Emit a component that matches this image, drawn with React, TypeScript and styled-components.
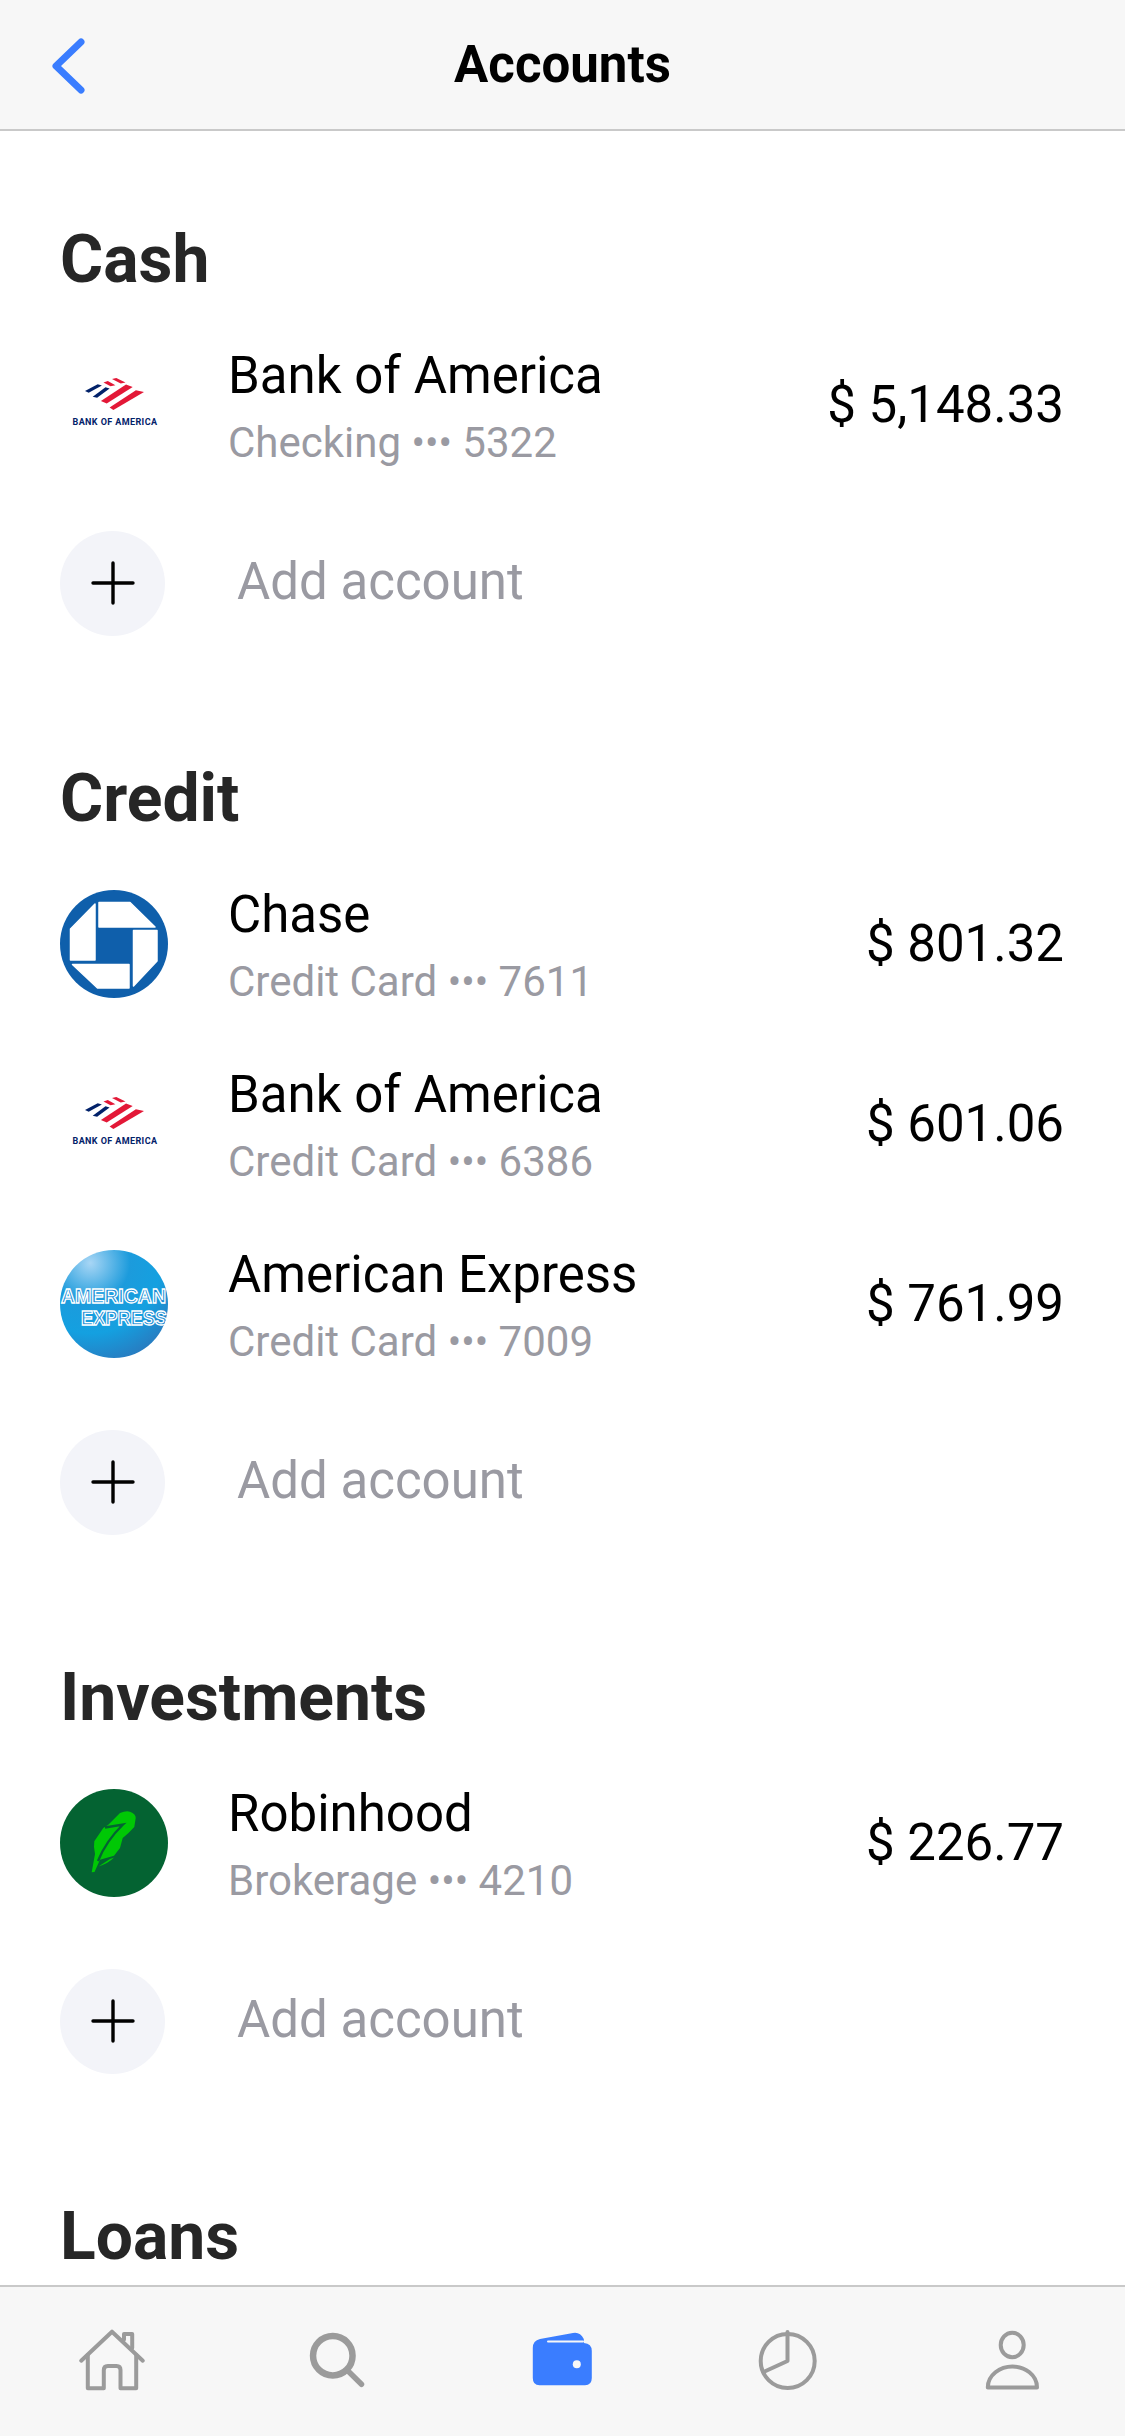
import React from "react";
import styled, { createGlobalStyle } from "styled-components";

const GlobalStyle = createGlobalStyle`
  html, body {
    margin: 0;
    padding: 0;
    background: #fff;
  }
  * {
    box-sizing: border-box;
  }
`;

type LogoKind = "boa" | "chase" | "amex" | "robinhood";

type Account = {
  logo: LogoKind;
  name: string;
  kind: string;
  last: string;
  amount: string;
};

const sections: { title: string; accounts: Account[] }[] = [
  {
    title: "Cash",
    accounts: [{ logo: "boa", name: "Bank of America", kind: "Checking", last: "5322", amount: "$ 5,148.33" }],
  },
  {
    title: "Credit",
    accounts: [
      { logo: "chase", name: "Chase", kind: "Credit Card", last: "7611", amount: "$ 801.32" },
      { logo: "boa", name: "Bank of America", kind: "Credit Card", last: "6386", amount: "$ 601.06" },
      { logo: "amex", name: "American Express", kind: "Credit Card", last: "7009", amount: "$ 761.99" },
    ],
  },
  {
    title: "Investments",
    accounts: [{ logo: "robinhood", name: "Robinhood", kind: "Brokerage", last: "4210", amount: "$ 226.77" }],
  },
];

const BoaLogo = () => (
  <svg width="108" height="108" viewBox="0 0 108 108">
    <polygon points="25,40.1 37.7,33.2 41.9,34.6 28.7,41.8" fill="#012169" />
    <polygon points="32.7,45.8 45.5,36.3 49.6,37.6 37.1,46.8" fill="#012169" />
    <polygon points="52,27.9 56.3,27 65.5,31.6 60.7,32.6" fill="#e31837" />
    <polygon points="43.5,31.6 47.8,29.9 55.4,34.2 50.5,35.2" fill="#e31837" />
    <polygon points="40.9,50 66,33.5 72.7,35.9 46.7,52.4" fill="#e31837" />
    <polygon points="49.6,56.6 75.9,39.2 84,40.9 53.4,59" fill="#e31837" />
    <text x="12.5" y="74" textLength="84.5" fontFamily="Roboto, sans-serif" fontWeight="700" fontSize="9" fill="#012169">
      BANK OF AMERICA
    </text>
  </svg>
);

const ChaseLogo = () => (
  <svg width="108" height="108" viewBox="0 0 108 108">
    <circle cx="54" cy="54" r="54" fill="#0f5fab" />
    <g fill="#fff" stroke="#fff" strokeWidth="1.5" strokeLinejoin="round">
      <polygon points="39,12.5 70,12.5 95,37 39,37" />
      <polygon points="73.5,40.5 97,40.5 97,71 73.5,96" />
      <polygon points="69,74.5 69,98 37.5,98 12.5,74.5" />
      <polygon points="35,14 35,70 10.5,70 10.5,39" />
    </g>
  </svg>
);

const AmexLogo = () => (
  <svg width="108" height="108" viewBox="0 0 108 108">
    <defs>
      <radialGradient id="amexFill" cx="0.28" cy="0.12" r="1.05">
        <stop offset="0" stopColor="#a8d6f5" />
        <stop offset="0.35" stopColor="#1c9bdc" />
        <stop offset="0.62" stopColor="#14a0e0" />
        <stop offset="1" stopColor="#2f6fb5" />
      </radialGradient>
      <clipPath id="amexClip">
        <circle cx="54" cy="54" r="54" />
      </clipPath>
    </defs>
    <circle cx="54" cy="54" r="54" fill="url(#amexFill)" />
    <g
      clipPath="url(#amexClip)"
      fontFamily="'Liberation Sans', sans-serif"
      fontSize="20"
      fontWeight="700"
      fill="#1a8ad4"
      stroke="#fff"
      strokeWidth="1.3"
    >
      <text x="1" y="53" textLength="105" lengthAdjust="spacingAndGlyphs">AMERICAN</text>
      <text x="21" y="75" textLength="86" lengthAdjust="spacingAndGlyphs">EXPRESS</text>
    </g>
  </svg>
);

const RobinhoodLogo = () => (
  <svg width="108" height="108" viewBox="0 0 108 108">
    <circle cx="54" cy="54" r="54" fill="#046332" />
    <g fill="#00c805">
      <path d="M48.3 35.7 L60 24 Q66 21.5 70 22.7 Q76 25 75.7 29 L74.3 38 Q69 44 62.7 49 L60 59 L54 66.7 L40 70.7 L34.5 83 L31.7 83.3 L35 65 L34 58 L34.3 52.3 L43.3 39 Z" />
      <path d="M38.5 77.5 L50 70 L54 68.5 Q49 74 38.5 77.5 Z" />
    </g>
    <path d="M38 72 Q46 52 63 35.5 L45 38.5" fill="none" stroke="#046332" strokeWidth="2.4" />
  </svg>
);

const logos: Record<LogoKind, React.ReactNode> = {
  boa: <BoaLogo />,
  chase: <ChaseLogo />,
  amex: <AmexLogo />,
  robinhood: <RobinhoodLogo />,
};

const tabIcons: React.ReactNode[] = [
  <g key="home" fill="none" stroke="#9b9b9b" strokeWidth="4" strokeLinecap="round" strokeLinejoin="round">
    <path d="M8.2 40.7 L39 11.7 L69.8 40.7" />
    <path d="M51 19.5 V14 H59.2 V28" />
    <path d="M14.8 35 V68.3 H30.8 V50 Q30.8 46 34.8 46 H43.5 Q47.5 46 47.5 50 V68.3 H63.2 V35" />
  </g>,
  <g key="search" fill="none" stroke="#9b9b9b" strokeLinecap="round">
    <circle cx="34.8" cy="35.7" r="19.75" strokeWidth="6.5" />
    <path d="M50.8 51.7 L63.5 64.3" strokeWidth="5.5" />
  </g>,
  <g key="wallet">
    <path
      d="M9.8 28 Q9.8 20.5 17 19 L50 13 Q57 11.6 60.8 19 L61 23 Q68.8 23.5 68.8 31 V58 Q68.8 65.3 62 65.3 H16.5 Q9.8 65.3 9.8 58 Z"
      fill="#3a7dff"
    />
    <path d="M25 21.6 H60" fill="none" stroke="#f7f7f7" strokeWidth="2" strokeLinecap="round" />
    <circle cx="53.8" cy="44.3" r="4" fill="#f7f7f7" />
  </g>,
  <g key="pie" fill="none" stroke="#9b9b9b" strokeWidth="4" strokeLinejoin="round" strokeLinecap="round">
    <circle cx="39.7" cy="41" r="27" />
    <path d="M39.5 12 V41 L15.5 52" />
  </g>,
  <g key="user" fill="none" stroke="#9b9b9b" strokeWidth="4" strokeLinejoin="round">
    <ellipse cx="39.2" cy="25" rx="11.5" ry="12.3" />
    <path d="M14.8 67.5 C14.8 55 27 46.5 39.5 46.5 C52 46.5 64 55 64 67.5 Z" />
  </g>,
];

const App = () => {
  return (
    <Screen>
      <GlobalStyle />
      <Header>
        <BackButton>
          <svg width="40" height="64" viewBox="0 0 40 64">
            <path d="M31 8 L6 32 L31 56" fill="none" stroke="#3a7dff" strokeWidth="7" strokeLinecap="round" strokeLinejoin="round" />
          </svg>
        </BackButton>
        <Title>Accounts</Title>
      </Header>
      <Main>
        {sections.map((section) => (
          <Section key={section.title}>
            <Heading>{section.title}</Heading>
            {section.accounts.map((account) => (
              <Row key={account.last}>
                <Logo>{logos[account.logo]}</Logo>
                <Info>
                  <Name>{account.name}</Name>
                  <Sub>
                    {account.kind} <Dots>•••</Dots> {account.last}
                  </Sub>
                </Info>
                <Amount>{account.amount}</Amount>
              </Row>
            ))}
            <AddRow>
              <AddCircle>
                <svg width="44" height="44" viewBox="0 0 44 44">
                  <path d="M22 2 V42 M2 22 H42" fill="none" stroke="#000" strokeWidth="3.4" strokeLinecap="round" />
                </svg>
              </AddCircle>
              <AddText>Add account</AddText>
            </AddRow>
          </Section>
        ))}
        <Heading>Loans</Heading>
      </Main>
      <TabBar>
        {tabIcons.map((icon, i) => (
          <Tab key={i}>
            <svg width="80" height="80" viewBox="0 0 80 80">
              {icon}
            </svg>
          </Tab>
        ))}
      </TabBar>
    </Screen>
  );
};

export default App;

const Tab = styled.div`
  display: flex;
  justify-content: center;
  align-items: center;
`;
const TabBar = styled.nav`
  height: 151px;
  flex-shrink: 0;
  display: grid;
  grid-template-columns: repeat(5, 1fr);
  align-items: center;
  padding-bottom: 3px;
  background-color: #f7f7f7;
  border-top: 2px solid #c9c9c9;
`;
const AddText = styled.span`
  margin-left: 72px;
  margin-bottom: 3px;
  color: #9a9aa2;
  font-size: 51px;
  line-height: 60px;
`;
const AddCircle = styled.div`
  width: 105px;
  height: 105px;
  display: flex;
  justify-content: center;
  align-items: center;
  border-radius: 50%;
  background-color: #f3f4f9;
`;
const AddRow = styled.div`
  height: 176px;
  display: flex;
  align-items: center;
`;
const Amount = styled.div`
  margin-left: auto;
  color: #000;
  font-size: 51px;
  line-height: 60px;
`;
const Dots = styled.span`
  font-size: 40px;
  line-height: 0;
`;
const Sub = styled.div`
  color: #9a9aa2;
  font-size: 42px;
  line-height: 54px;
`;
const Name = styled.div`
  color: #000;
  font-size: 51px;
  line-height: 60px;
`;
const Info = styled.div`
  margin-left: 60px;
  padding-top: 5px;
  display: flex;
  flex-direction: column;
  gap: 10px;
`;
const Logo = styled.div`
  width: 108px;
  height: 108px;
  flex-shrink: 0;
`;
const Row = styled.div`
  height: 180px;
  display: flex;
  align-items: center;
`;
const Heading = styled.h2`
  margin: 0 0 15px;
  padding-top: 3px;
  color: #262626;
  font-size: 66px;
  font-weight: 700;
  line-height: 80px;
`;
const Section = styled.section`
  margin-bottom: 85px;
`;
const Main = styled.main`
  flex: 1;
  min-height: 0;
  overflow: hidden;
  padding: 86px 61px 0 60px;
  background-color: #fff;
`;
const Title = styled.h1`
  margin: 0;
  grid-column: 2;
  color: #000;
  font-size: 51px;
  font-weight: 700;
`;
const BackButton = styled.div`
  padding: 3px 0 0 50px;
  display: flex;
  align-items: center;
`;
const Header = styled.header`
  height: 131px;
  flex-shrink: 0;
  display: grid;
  grid-template-columns: 1fr auto 1fr;
  align-items: center;
  background-color: #f7f7f7;
  border-bottom: 2px solid #c9c9c9;
`;
const Screen = styled.div`
  width: 1125px;
  height: 2436px;
  display: flex;
  flex-direction: column;
  overflow: hidden;
  font-family: Roboto, sans-serif;
`;
